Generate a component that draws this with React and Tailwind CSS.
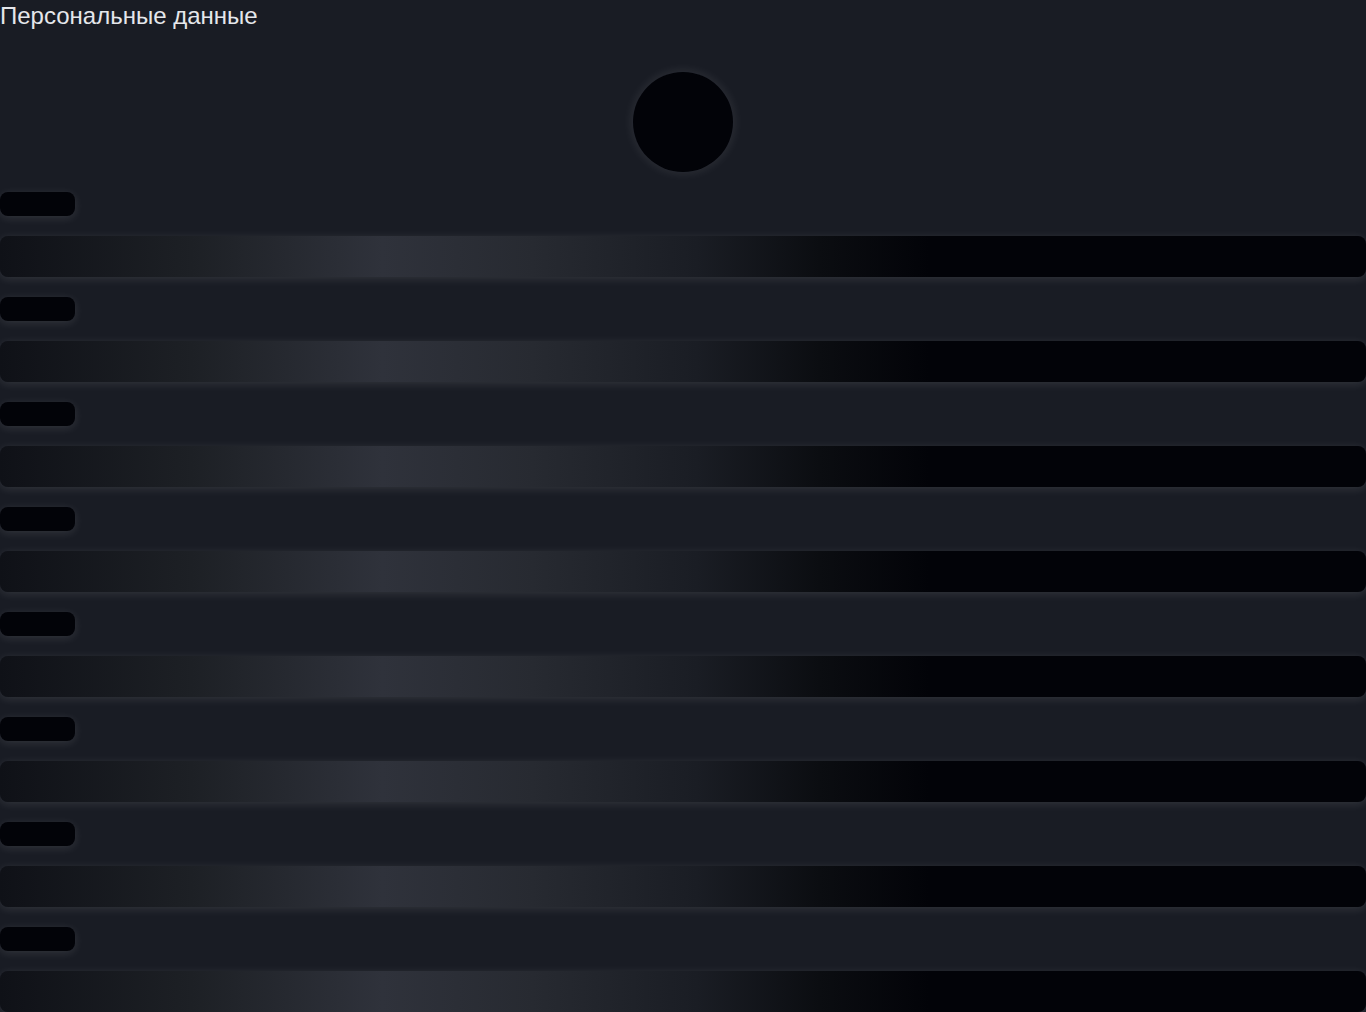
import React from 'react';

/**
 * Скелетон формы персональных данных
 */
function SkeletonField() {
    return (
        <div className="flex flex-col gap-5">
            <div className="h-6 w-[75px] rounded-lg bg-[#020308] shadow-[0_2px_10px_rgba(255,255,255,0.11)]" />
            <div className="h-[41px] w-full rounded-lg bg-[linear-gradient(90deg,#0f1117_0%,#1d2025_14%,#2f323b_28%,#272a31_39%,#1a1d24_51%,#0b0d11_60%,#020308_68%,#020308_100%)] shadow-[0_2px_10px_rgba(255,255,255,0.11)]" />
        </div>
    );
}

export default function App() {
    const fields = Array.from({ length: 8 });

    return (
        <div className="min-h-screen bg-[#191c24] font-['Liberation_Sans',Arial,sans-serif]">
            <h1 className="text-2xl leading-8 text-[#e5e7eb]">Персональные данные</h1>
            <div className="mt-10 flex justify-center">
                <div className="h-[100px] w-[100px] rounded-full bg-[#020308] shadow-[0_0_12px_rgba(255,255,255,0.11)]" />
            </div>
            <div className="mt-5 flex flex-col gap-5">
                {fields.map((_, i) => (
                    <SkeletonField key={i} />
                ))}
            </div>
        </div>
    );
}
